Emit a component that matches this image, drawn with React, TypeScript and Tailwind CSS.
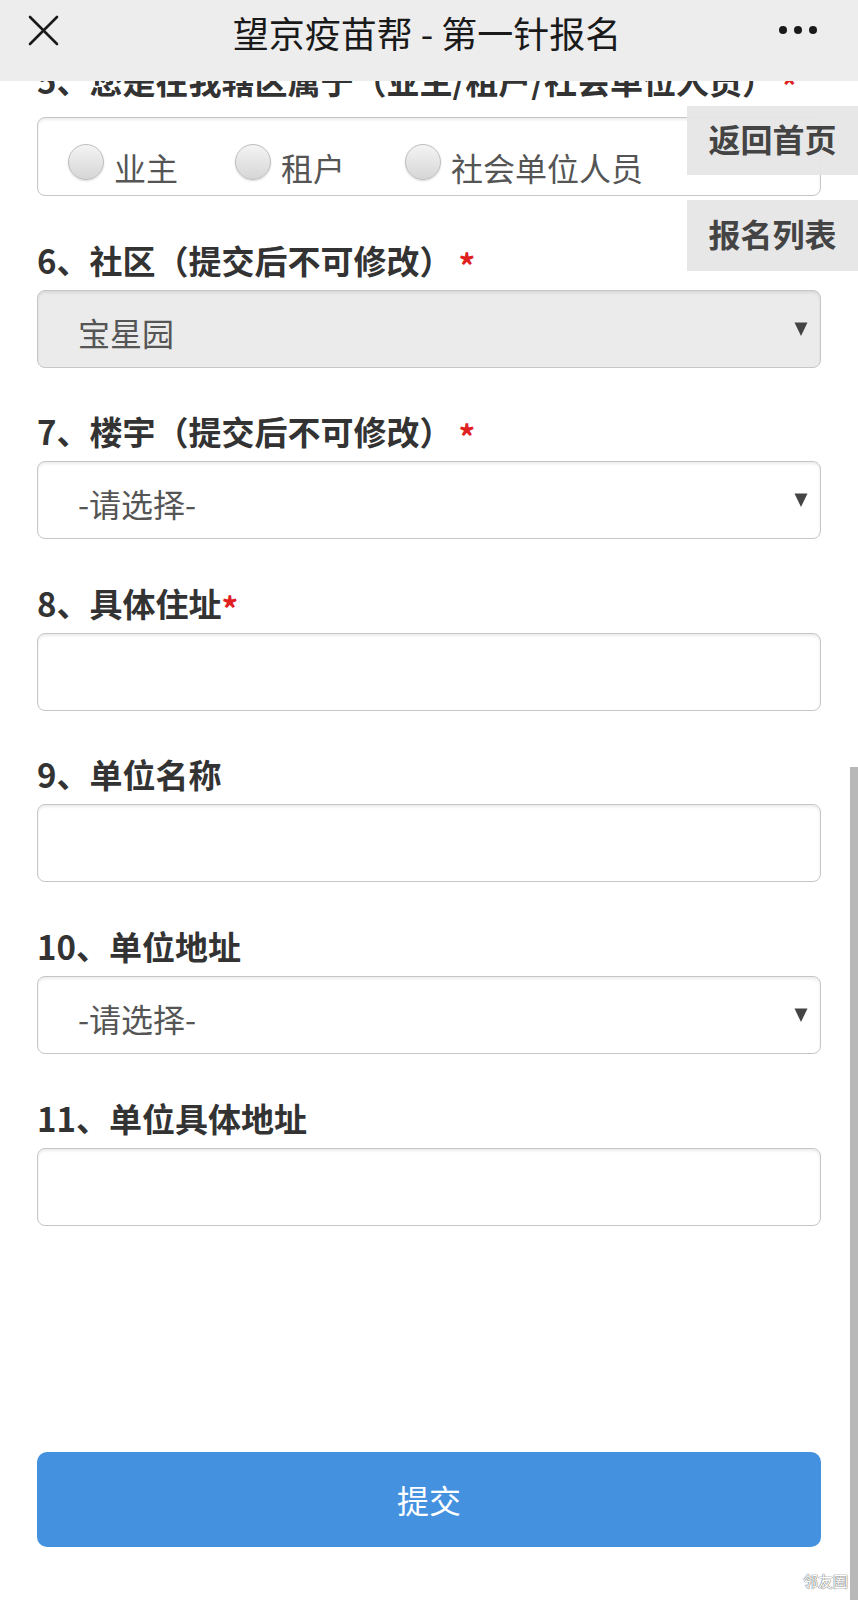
import React from "react";

function Star({ tight }: { tight?: boolean }) {
  return <span className={`relative top-[5px] text-[#e0201f] ${tight ? "" : "ml-[6px]"}`}>*</span>;
}

function Label({
  children,
  star,
  tight,
  mb = "mb-[7px]",
}: {
  children: React.ReactNode;
  star?: boolean;
  tight?: boolean;
  mb?: string;
}) {
  return (
    <div className={`h-[40px] leading-[34px] text-[33px] font-bold text-[#333] whitespace-nowrap ${mb}`}>
      {children}
      {star && <Star tight={tight} />}
    </div>
  );
}

function Arrow() {
  return (
    <svg width="14" height="16" viewBox="0 0 14 16" className="shrink-0">
      <path d="M0.5 1.5 L13.5 1.5 L7 15 Z" fill="#444" />
    </svg>
  );
}

function SelectBox({ text, disabled }: { text: string; disabled?: boolean }) {
  return (
    <div
      className={`h-[78px] rounded-[8px] border-[1.5px] border-[#c6c6c6] shadow-[inset_0_2px_3px_rgba(0,0,0,0.08)] flex items-center pl-[40px] pr-[12px] ${
        disabled ? "bg-[#ebebeb]" : "bg-white"
      }`}
    >
      <span className="flex-1 text-[32px] text-[#555] leading-none pt-[6px]">{text}</span>
      <Arrow />
    </div>
  );
}

function InputBox() {
  return (
    <div className="h-[78px] rounded-[8px] border-[1.5px] border-[#c6c6c6] bg-white shadow-[inset_0_2px_3px_rgba(0,0,0,0.08)]" />
  );
}

function Radio({ label }: { label: string }) {
  return (
    <div className="flex items-center">
      <span className="w-[36px] h-[36px] rounded-full border border-[#bdbdbd] bg-gradient-to-b from-[#f4f4f4] to-[#d6d6d6] shadow-[0_1px_2px_rgba(0,0,0,0.15)]" />
      <span className="ml-[10px] text-[32px] text-[#555] leading-none pt-[10px]">{label}</span>
    </div>
  );
}

function Field({ children, last }: { children: React.ReactNode; last?: boolean }) {
  return <div className={last ? "" : "mb-[46.6px]"}>{children}</div>;
}

export default function App() {
  return (
    <div
      className="relative w-[858px] h-[1600px] bg-white overflow-hidden"
      style={{ fontFamily: '"Noto Sans CJK SC", "Noto Sans", sans-serif' }}
    >
      {/* content */}
      <div className="px-[37px] pt-[63px]">
        <Field>
          <Label star mb="mb-[14px]">
            5、您是在我辖区属于（业主/租户/社会单位人员）
          </Label>
          <div className="h-[79px] rounded-[8px] border-[1.5px] border-[#c6c6c6] bg-white shadow-[inset_0_2px_3px_rgba(0,0,0,0.08)] flex items-center pl-[30px] pt-[10px]">
            <Radio label="业主" />
            <div className="w-[57px]" />
            <Radio label="租户" />
            <div className="w-[60px]" />
            <Radio label="社会单位人员" />
          </div>
        </Field>
        <Field>
          <Label star>6、社区（提交后不可修改）</Label>
          <SelectBox text="宝星园" disabled />
        </Field>
        <Field>
          <Label star>7、楼宇（提交后不可修改）</Label>
          <SelectBox text="-请选择-" />
        </Field>
        <Field>
          <Label star tight>
            8、具体住址
          </Label>
          <InputBox />
        </Field>
        <Field>
          <Label>9、单位名称</Label>
          <InputBox />
        </Field>
        <Field>
          <Label>10、单位地址</Label>
          <SelectBox text="-请选择-" />
        </Field>
        <Field last>
          <Label>11、单位具体地址</Label>
          <InputBox />
        </Field>

        <button className="mt-[226px] w-full h-[95px] rounded-[10px] bg-[#4491e0] text-white text-[32px] flex items-center justify-center">
          提交
        </button>
      </div>

      {/* header */}
      <div className="absolute top-0 left-0 right-0 h-[81px] bg-[#ededed]">
        <div className="h-[60px] flex items-center px-[28px]">
          <svg width="31" height="31" viewBox="0 0 31 31" className="shrink-0">
            <path d="M2 2 L29 29 M29 2 L2 29" stroke="#1a1a1a" strokeWidth="2.6" strokeLinecap="round" />
          </svg>
          <div className="flex-1 text-center text-[36px] text-[#1a1a1a] leading-none pl-[16px] pt-[4px]">
            望京疫苗帮 - 第一针报名
          </div>
          <div className="flex gap-[7px] mr-[13px]">
            <span className="w-[8px] h-[8px] rounded-full bg-[#1a1a1a]" />
            <span className="w-[8px] h-[8px] rounded-full bg-[#1a1a1a]" />
            <span className="w-[8px] h-[8px] rounded-full bg-[#1a1a1a]" />
          </div>
        </div>
      </div>

      {/* floating side buttons */}
      <div className="absolute right-0 top-[106px] w-[171px] h-[69px] bg-[#e6e6e6]/95 flex items-center justify-center pb-[6px] text-[32px] font-semibold text-[#444]">
        返回首页
      </div>
      <div className="absolute right-0 top-[200px] w-[171px] h-[71px] bg-[#e6e6e6]/95 flex items-center justify-center pb-[6px] text-[32px] font-semibold text-[#444]">
        报名列表
      </div>

      {/* scrollbar */}
      <div className="absolute right-0 top-[767px] bottom-0 w-[8px] bg-[#b8b8b8]" />

      {/* watermark */}
      <div className="absolute right-[10px] bottom-[12px] text-[15px] text-white leading-none [text-shadow:0_0_1px_#777,0_0_1px_#777,0_0_1px_#777]">
        邻友圈
      </div>
    </div>
  );
}
